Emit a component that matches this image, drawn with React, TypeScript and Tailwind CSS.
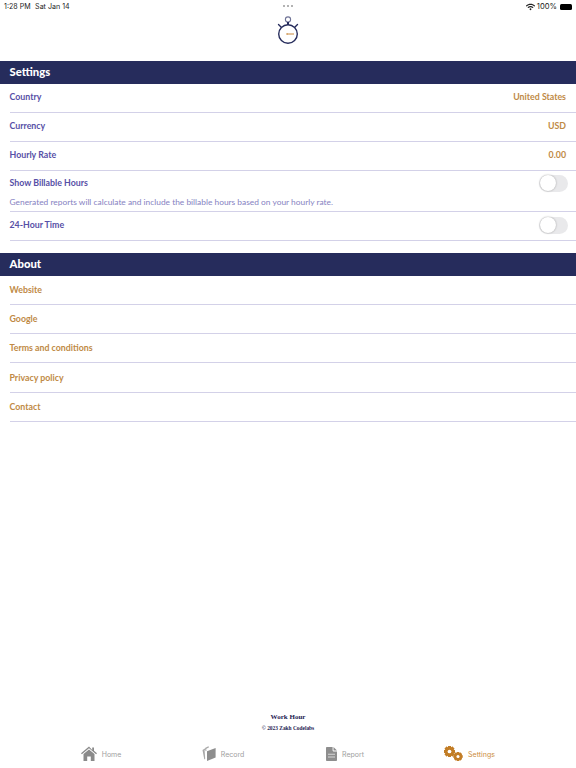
import { FaWifi } from "react-icons/fa";

const optima = "font-['Lato',sans-serif]";

function StatusBar() {
  return (
    <div className="relative flex h-[13px] items-center justify-between pl-1 pr-[4px] pt-[1px] font-['Inter',sans-serif] text-[7.1px] text-[#222]">
      <div className="flex gap-[4.5px]">
        <span>1:28 PM</span>
        <span>Sat Jan 14</span>
      </div>
      <div className="absolute left-[283px] top-[5px] flex gap-[2px]">
        <div className="h-[2px] w-[2px] rounded-full bg-[#9a9a9a]" />
        <div className="h-[2px] w-[2px] rounded-full bg-[#9a9a9a]" />
        <div className="h-[2px] w-[2px] rounded-full bg-[#9a9a9a]" />
      </div>
      <div className="flex items-center gap-[2px]">
        <FaWifi className="h-[8px] w-[9px]" />
        <span className="text-[7.6px]">100%</span>
        <div className="ml-[1px] h-[6px] w-[12px] rounded-[1.5px] bg-black" />
      </div>
    </div>
  );
}

function Stopwatch() {
  return (
    <svg width="24" height="30" viewBox="0 0 24 30" fill="none">
      <circle cx="12" cy="3.5" r="2.6" stroke="#6f7396" strokeWidth="1.1" />
      <path d="M12 6v3" stroke="#262c5c" strokeWidth="2" />
      <path d="M2.5 8.5l2.5 2.5M21.5 8.5L19 11" stroke="#262c5c" strokeWidth="1.4" strokeLinecap="round" />
      <circle cx="12" cy="18" r="9.3" stroke="#262c5c" strokeWidth="1.4" />
      <path d="M11 18h7" stroke="#c98a3f" strokeWidth="1" />
      <circle cx="11" cy="18" r="0.8" fill="#c98a3f" />
    </svg>
  );
}

function SectionBar({ title }: { title: string }) {
  return (
    <div className={`flex h-[23px] items-center bg-[#262c5c] pb-[1px] pl-[9.5px] text-[11.3px] font-black text-white ${optima}`}>
      {title}
    </div>
  );
}

function Toggle() {
  return (
    <div className="h-[17px] w-[29px] rounded-full bg-[#e9e9eb] p-[0.5px]">
      <div className="h-[16px] w-[16px] rounded-full bg-white shadow-[0_0_2px_rgba(0,0,0,0.35)]" />
    </div>
  );
}

function Row({ label, value }: { label: string; value: string }) {
  return (
    <div className={`ml-[9.5px] flex h-[29px] items-center justify-between border-b border-[#d3d1e8] pb-[3px] pr-[10px] text-[8.8px] font-bold ${optima}`}>
      <span className="text-[#5750a6]">{label}</span>
      <span className="text-[#c08a45]">{value}</span>
    </div>
  );
}

function LinkRow({ label, tall }: { label: string; tall?: boolean }) {
  return (
    <div className={`ml-[9.5px] flex items-center border-b border-[#d3d1e8] text-[8.8px] font-bold text-[#c08a45] ${tall ? "h-[30px]" : "h-[29px]"} ${optima}`}>
      {label}
    </div>
  );
}

function HomeIcon() {
  return (
    <svg width="16" height="15" viewBox="0 0 16 15" fill="#8a8a8a">
      <path d="M8 0.5L0 7.2l0.9 1L8 2.3l7.1 5.9 0.9-1-3-2.5V1.5h-1.8v2.6z" />
      <path fillRule="evenodd" d="M8 3.5l5.5 4.6V15H9.8v-4.5H6.2V15H2.5V8.1z" />
    </svg>
  );
}

function RecordIcon() {
  return (
    <svg width="14" height="15" viewBox="0 0 14 15" fill="#8e8e8e">
      <path d="M0.5 4L2.8 2.4l0.8 1-1 .7.6 8.6-0.9 0.9z" fill="#a8a8a8" />
      <path d="M3 2L6.4 0.2l0.7 1-3 1.8.5 1.5-1 .7z" fill="#a8a8a8" />
      <path d="M5 5.2L13.6 2v9.6L5 15z" />
    </svg>
  );
}

function ReportIcon() {
  return (
    <svg width="11" height="14" viewBox="0 0 11 14">
      <path d="M0 0.8C0 .4.4 0 .8 0H6.6V3.6c0 .4.4.8.8.8H11v8.8c0 .4-.4.8-.8.8H.8c-.4 0-.8-.4-.8-.8z" fill="#8e8e8e" />
      <path d="M7.5 0L11 3.5H7.5z" fill="#8e8e8e" />
      <path d="M2 7.2h7M2 10h7" stroke="#d8d8d8" strokeWidth="1.1" />
    </svg>
  );
}

function Gear({ cx, cy, r }: { cx: number; cy: number; r: number }) {
  const teeth = [0, 45, 90, 135, 180, 225, 270, 315];
  const w = r * 0.55;
  return (
    <g>
      {teeth.map((a) => (
        <rect key={a} x={cx - w / 2} y={cy - r} width={w} height={r * 2} transform={`rotate(${a} ${cx} ${cy})`} />
      ))}
      <circle cx={cx} cy={cy} r={r * 0.78} />
      <circle cx={cx} cy={cy} r={r * 0.34} fill="#fff" />
    </g>
  );
}

function GearsIcon() {
  return (
    <svg width="19" height="15" viewBox="0 0 19 15" fill="#c27d26">
      <Gear cx={5.5} cy={5.5} r={5.5} />
      <Gear cx={14} cy={10.5} r={4.5} />
    </svg>
  );
}

function Tab({ icon, label, active, width }: { icon: React.ReactNode; label: string; active?: boolean; width: string }) {
  return (
    <div className={`flex shrink-0 items-center justify-center gap-[5px] ${width}`}>
      {icon}
      <span className={`mt-[2px] font-['Inter',sans-serif] text-[7px] ${active ? "text-[#cc8d3e]" : "text-[#a0a0a0]"}`}>{label}</span>
    </div>
  );
}

export default function App() {
  return (
    <div className="flex h-[768px] w-[576px] flex-col overflow-hidden bg-white">
      <StatusBar />
      <div className="flex h-[48px] items-start justify-center pt-[3px]">
        <Stopwatch />
      </div>
      <SectionBar title="Settings" />
      <Row label="Country" value="United States" />
      <Row label="Currency" value="USD" />
      <Row label="Hourly Rate" value="0.00" />
      <div className={`ml-[9.5px] h-[41px] border-b border-[#d3d1e8] ${optima}`}>
        <div className="flex h-[24px] items-center justify-between pr-[8px] text-[8.8px] font-bold text-[#5750a6]">
          <span>Show Billable Hours</span>
          <Toggle />
        </div>
        <p className="mt-[1.5px] text-[8.4px] leading-[11px] text-[#8682c2]">
          Generated reports will calculate and include the billable hours based on your hourly rate.
        </p>
      </div>
      <div className={`ml-[9.5px] flex h-[29px] items-center justify-between border-b border-[#d3d1e8] pb-[2px] pr-[8px] text-[8.8px] font-bold text-[#5750a6] ${optima}`}>
        <span>24-Hour Time</span>
        <Toggle />
      </div>
      <div className="h-[12px]" />
      <SectionBar title="About" />
      <LinkRow label="Website" />
      <LinkRow label="Google" />
      <LinkRow label="Terms and conditions" />
      <LinkRow tall label="Privacy policy" />
      <LinkRow label="Contact" />
      <div className="flex-1" />
      <div className="flex flex-col items-center font-['Liberation_Serif',serif] font-bold text-[#1c2150]">
        <span className="text-[7px] leading-[10px]">Work Hour</span>
        <span className="mt-[2px] text-[5.4px] leading-[8px]">© 2023 Zakh Codelabs</span>
      </div>
      <div className="flex h-[36.5px] items-center pl-[40px] pt-[8px]">
        <Tab width="w-[122px]" icon={<HomeIcon />} label="Home" />
        <Tab width="w-[122px]" icon={<RecordIcon />} label="Record" />
        <Tab width="w-[122px]" icon={<ReportIcon />} label="Report" />
        <Tab width="w-[127px]" active icon={<GearsIcon />} label="Settings" />
      </div>
    </div>
  );
}
